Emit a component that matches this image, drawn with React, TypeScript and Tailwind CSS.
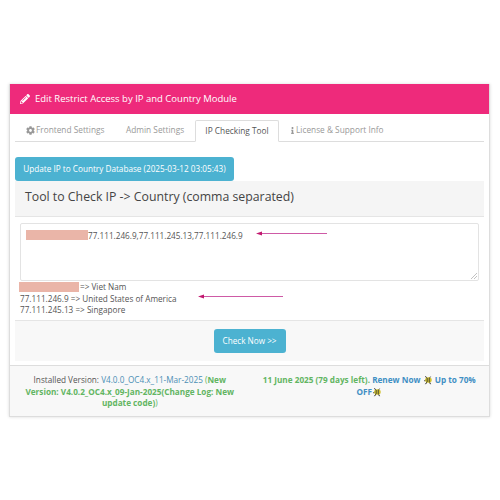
import { FaCog, FaInfo, FaPencilAlt } from "react-icons/fa";

const Bee = () => (
  <svg viewBox="0 0 12 12" className="inline-block w-[10px] h-[10px] align-[-2px]">
    <path d="M3 1.5l2 3M9 2L7 4.5M1.5 7L4 6M3 11l2-3M9 11L7.5 8" stroke="#222" strokeWidth="1.2" />
    <ellipse cx="6.5" cy="6" rx="4" ry="3.2" fill="#d3c332" />
    <path d="M5 3.5v5M7.5 3.5v5" stroke="#333" strokeWidth="1" />
  </svg>
);

const Arrow = ({ width }: { width: number }) => (
  <svg width={width} height="5" viewBox={`0 0 ${width} 5`} className="block">
    <path d={`M5 2.5H${width}`} stroke="#c2308f" strokeWidth="0.8" />
    <path d="M0 2.5L6 0.5V4.5Z" fill="#c2186f" />
  </svg>
);

export default function App() {
  return (
    <div className="w-[500px] h-[500px] bg-white pt-[84px] pl-[9px] font-['Open_Sans',sans-serif] text-[#555]">
      <div className="w-[481px] h-[333px] border border-[#ddd] border-t-0 shadow-[0_0_3px_rgba(0,0,0,0.15)] flex flex-col">
        {/* Heading */}
        <div className="h-[30px] bg-[#ee2a7b] text-white flex items-center px-[10px] gap-[5px] text-[9.5px] shrink-0">
          <FaPencilAlt size={10} />
          <span>Edit Restrict Access by IP and Country Module</span>
        </div>

        <div className="flex-1 px-[5px] pt-[6px]">
          {/* Tabs */}
          <div className="h-[22px] flex border-b border-[#ddd] text-[8.3px] text-[#999] pl-[1px]">
            <div className="w-[100px] flex items-center pl-[10px] gap-[1px]">
              <FaCog size={9} />
              <span>Frontend Settings</span>
            </div>
            <div className="w-[79px] flex items-center pl-[10px]">Admin Settings</div>
            <div className="w-[84px] h-[22px] flex items-center justify-center bg-white border border-[#ddd] border-b-white rounded-t-[2px] text-[#555]">
              IP Checking Tool
            </div>
            <div className="flex items-center pl-[10px]">
              <FaInfo size={7} />
              <span>License &amp; Support Info</span>
            </div>
          </div>

          <button className="mt-[15px] h-[24px] w-[219px] bg-[#4cb2d1] rounded-[3px] text-white text-[8.2px] block">
            Update IP to Country Database (2025-03-12 03:05:43)
          </button>

          {/* Tool */}
          <div className="h-[36px] bg-[#f5f5f5] border-b border-[#e5e5e5] flex items-center pl-[10px] pb-[3px] text-[12.3px] text-[#444]">
            Tool to Check IP -&gt; Country (comma separated)
          </div>

          <div className="relative pt-[6px]">
            <div className="relative mx-[5px] h-[58px] border border-[#e3e3e3] rounded-[2px] pt-[6px] pl-[5px] flex items-start text-[8.2px] leading-[11px]">
              <span className="w-[62px] h-[10px] bg-[#eab5a8] shrink-0" />
              <span>77.111.246.9,77.111.245.13,77.111.246.9</span>
              <div className="absolute left-[235px] top-[7px]">
                <Arrow width={71} />
              </div>
              <svg viewBox="0 0 6 6" className="absolute right-[1px] bottom-[1px] w-[6px] h-[6px]">
                <path d="M0 6L6 0M3 6L6 3" stroke="#999" strokeWidth="0.6" />
              </svg>
            </div>

            <div className="relative pl-[5px] h-[40px] border-b border-[#e5e5e5] text-[8.2px] leading-[11.7px]">
              <div className="flex items-center h-[11.7px]">
                <span className="-ml-[1px] w-[60px] h-[10px] bg-[#eab5a8]" />
                <span className="ml-[1px]">=&gt; Viet Nam</span>
              </div>
              <div>77.111.246.9 =&gt; United States of America</div>
              <div>77.111.245.13 =&gt; Singapore</div>
              <div className="absolute left-[183px] top-[13px]">
                <Arrow width={85} />
              </div>
            </div>
          </div>

          <div className="h-[40px] bg-[#f8f8f8] flex items-center justify-center">
            <button className="w-[72px] h-[24px] bg-[#4cb2d1] rounded-[3px] text-white text-[8.2px]">
              Check Now &gt;&gt;
            </button>
          </div>
        </div>

        {/* Footer */}
        <div className="h-[51px] bg-[#f8f8f8] border-t border-[#ddd] grid grid-cols-2 text-[8.2px] leading-[11.5px] text-center pt-[8px]">
          <div className="px-[12px]">
            Installed Version: <span className="text-[#4a8fb5]">V4.0.0_OC4.x_11-Mar-2025</span>{" "}
            <span className="text-[#62b562]">
              (<b>New Version: V4.0.2_OC4.x_09-Jan-2025(Change Log: New update code)</b>)
            </span>
          </div>
          <div className="px-[5px] font-bold">
            <span className="text-[#62b562]">11 June 2025 (79 days left).</span>{" "}
            <span className="text-[#3f8fc4]">
              Renew Now <Bee /> Up to 70% OFF
              <Bee />
            </span>
          </div>
        </div>
      </div>
    </div>
  );
}
